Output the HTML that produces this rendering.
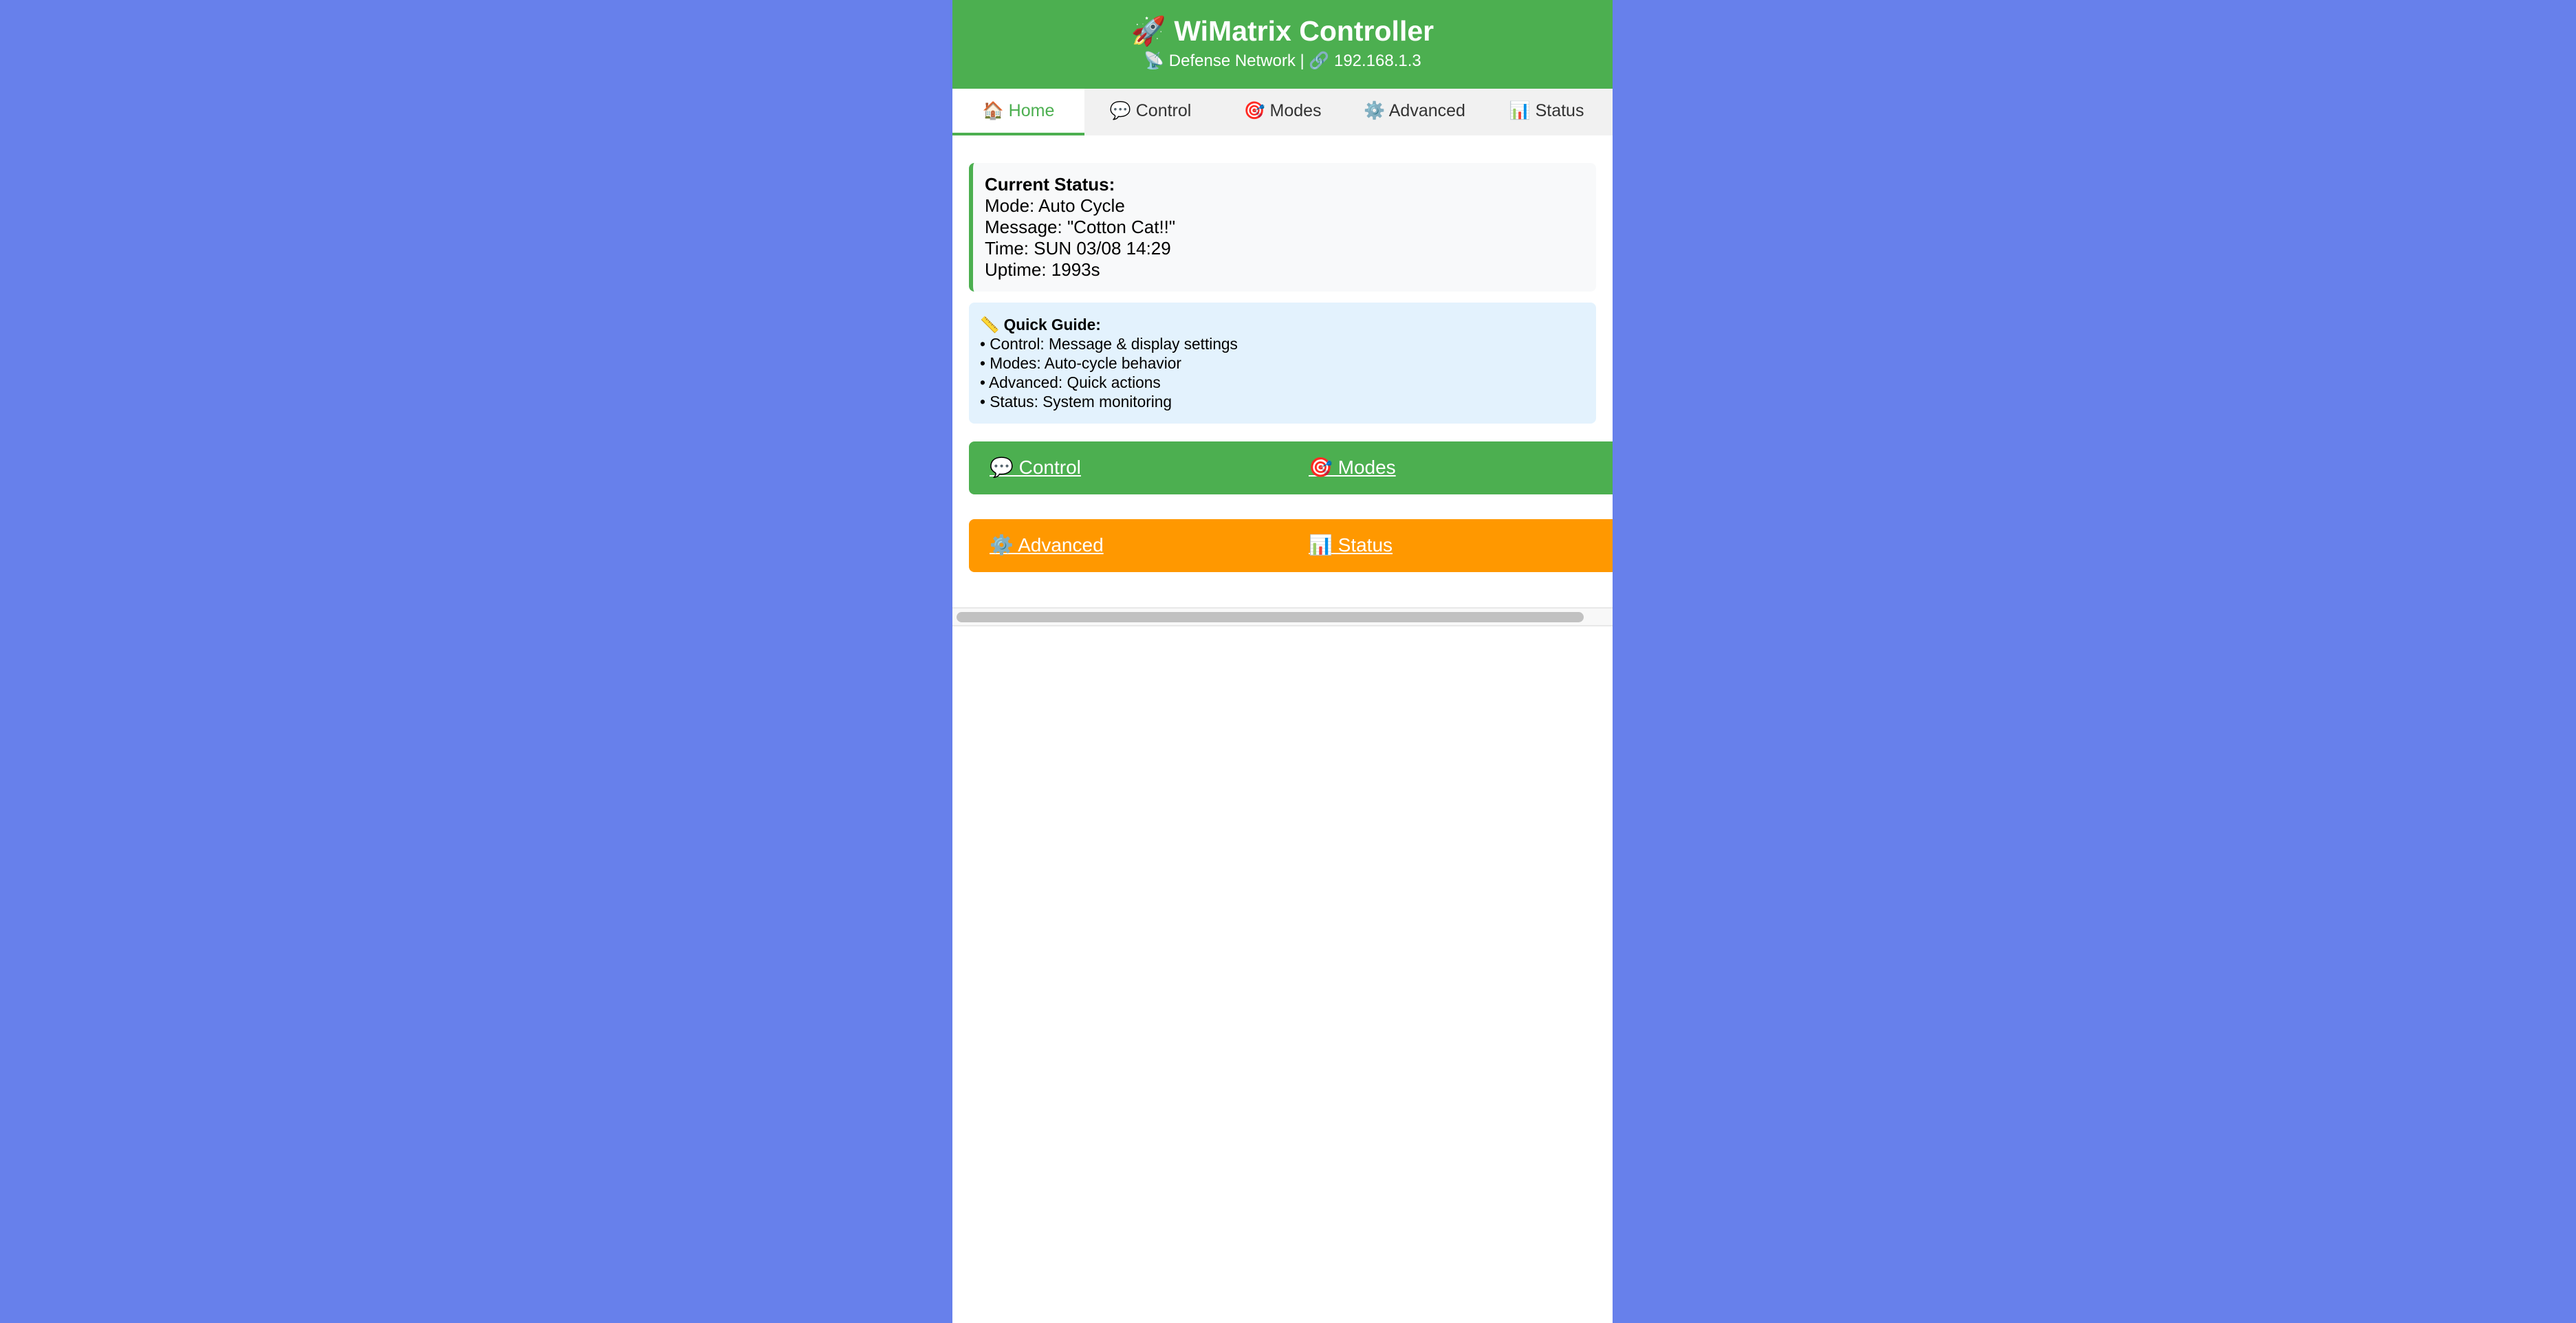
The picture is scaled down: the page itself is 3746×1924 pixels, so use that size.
<!DOCTYPE html>
<html><head><meta charset="utf-8"><style>
*{margin:0;padding:0;box-sizing:border-box}
body{width:3746px;height:1924px;background:#6780eb;font-family:"Liberation Sans","Noto Sans CJK SC",sans-serif;position:relative;overflow:hidden}
.c{position:absolute;left:1385px;top:0;width:960px;height:1924px;background:#fff;overflow:hidden}
.hd{position:absolute;left:0;top:0;width:960px;height:129px;background:#4caf50;color:#fff;text-align:center}
.hd h1{position:absolute;top:20px;width:100%;font-size:41px;font-weight:bold;line-height:50px}
.hd p{position:absolute;top:73px;width:100%;font-size:24px;line-height:32px}
.tabs{position:absolute;top:129px;left:0;width:960px;height:68px;background:#f1f1f1;display:flex}
.tabs div{flex:1;text-align:center;font-size:25px;line-height:64px;color:#333}
.tabs .a{background:#fff;color:#4caf50;border-bottom:4px solid #4caf50}
.st{position:absolute;left:24px;top:237px;width:912px;height:187px;background:#f8f9fa;border-left:6px solid #4caf50;border-radius:8px;padding:16px 0 0 17px;font-size:26px;line-height:31px;color:#000}
.gd{position:absolute;left:24px;top:440px;width:912px;height:176px;background:#e3f2fd;border-radius:8px;padding:18px 0 0 16px;font-size:22.7px;line-height:28px;color:#000}
.bt{position:absolute;left:24px;width:1000px;height:77px;border-radius:8px;color:#fff;font-size:28px}
.bt a{position:absolute;top:20px;color:#fff;text-decoration:underline;line-height:36px}
.sb{position:absolute;left:0;top:883px;width:960px;height:28px;background:#f8f8f8;border-top:2px solid #e8e8e8;border-bottom:2px solid #e8e8e8}
.th{position:absolute;left:6px;top:5px;width:912px;height:15px;background:#c1c1c1;border-radius:8px}
</style></head><body>
<div class="c">
<div class="hd"><h1>🚀 WiMatrix Controller</h1><p>📡 Defense Network | 🔗 192.168.1.3</p></div>
<div class="tabs"><div class="a">🏠 Home</div><div>💬 Control</div><div>🎯 Modes</div><div>⚙️ Advanced</div><div>📊 Status</div></div>
<div class="st"><b>Current Status:</b><br>Mode: Auto Cycle<br>Message: "Cotton Cat!!"<br>Time: SUN 03/08 14:29<br>Uptime: 1993s</div>
<div class="gd">📏 <b>Quick Guide:</b><br>• Control: Message &amp; display settings<br>• Modes: Auto-cycle behavior<br>• Advanced: Quick actions<br>• Status: System monitoring</div>
<div class="bt" style="top:642px;background:#4caf50"><a style="left:30px">💬 Control</a><a style="left:494px">🎯 Modes</a></div>
<div class="bt" style="top:755px;background:#ff9800"><a style="left:30px">⚙️ Advanced</a><a style="left:494px">📊 Status</a></div>
<div class="sb"><div class="th"></div></div>
</div>
</body></html>
